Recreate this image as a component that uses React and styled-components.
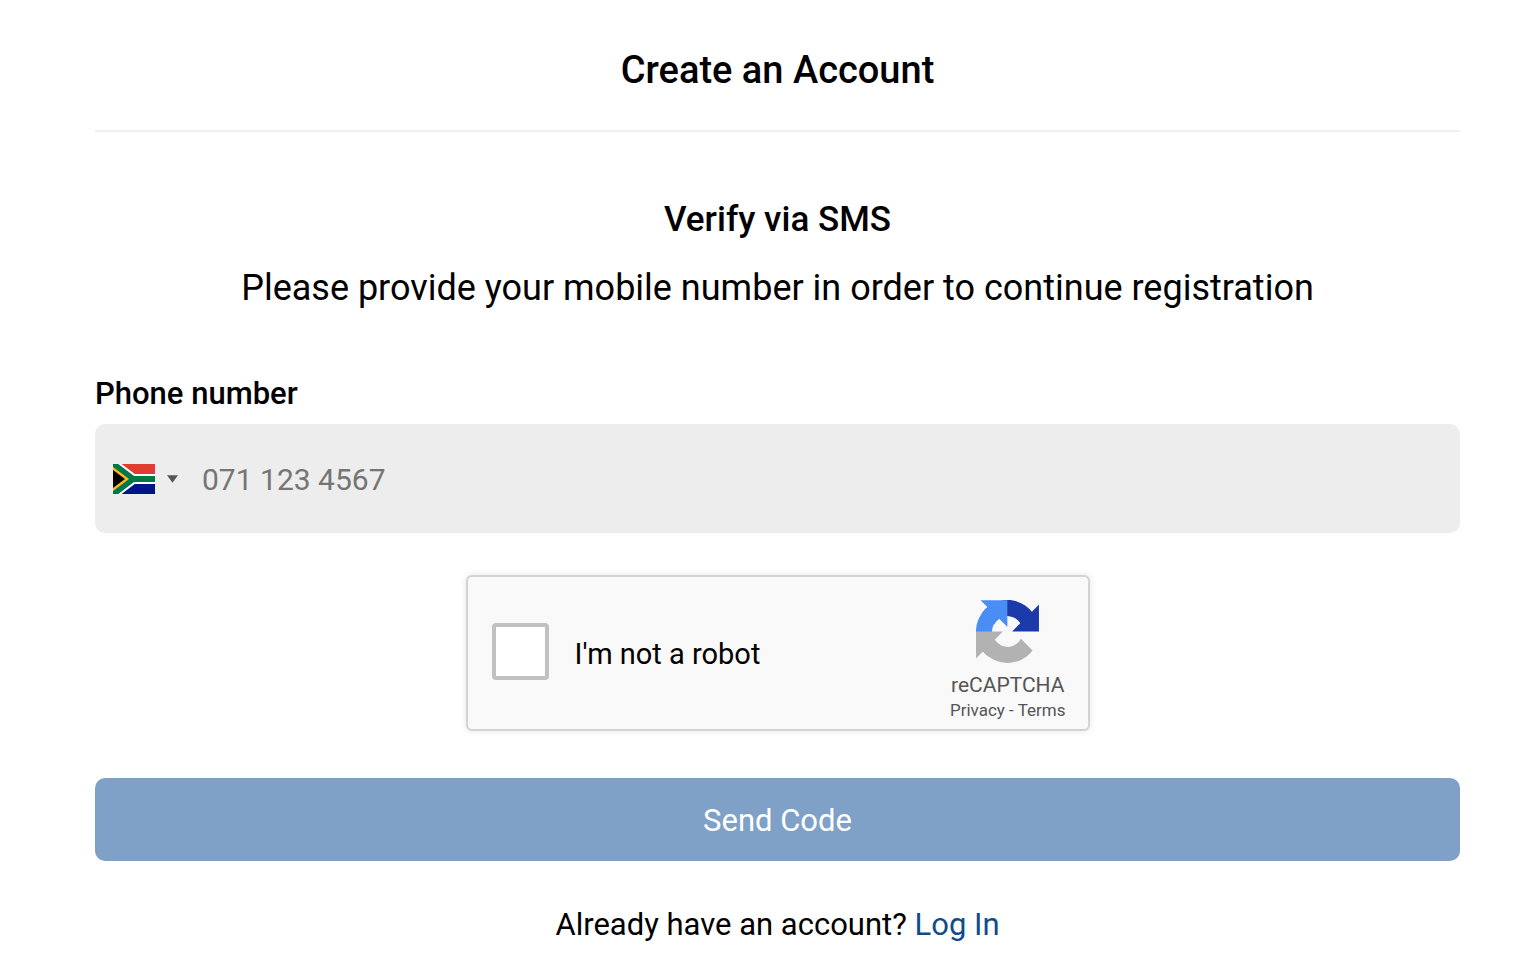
import { useState } from "react";
import styled, { createGlobalStyle } from "styled-components";

const GlobalStyle = createGlobalStyle`
  * {
    box-sizing: border-box;
  }
  body {
    margin: 0;
    background-color: #fff;
    color: #000;
    font-family: Roboto, "Liberation Sans", sans-serif;
  }
`;

const Page = styled.main`
  padding: 45px 76px 8px 95px;
`;
const Title = styled.h1`
  margin: 0;
  padding-bottom: 35px;
  border-bottom: 2px solid #f0f0f0;
  font-size: 38px;
  line-height: 50px;
  font-weight: 500;
  text-align: center;
`;
const Form = styled.form`
  display: flex;
  flex-direction: column;
`;
const Subtitle = styled.h2`
  margin: 64px 0 0;
  font-size: 35px;
  line-height: 48px;
  font-weight: 500;
  text-align: center;
`;
const Intro = styled.p`
  margin: 20px 0 0;
  font-size: 36px;
  line-height: 48px;
  text-align: center;
`;
const FieldLabel = styled.label`
  margin-top: 60px;
  font-size: 31px;
  line-height: 44px;
  font-weight: 500;
`;
const PhoneField = styled.div`
  display: flex;
  align-items: stretch;
  height: 109px;
  margin-top: 8px;
  border-radius: 10px;
  background-color: #ededed;
`;
const CountryButton = styled.button`
  display: flex;
  align-items: center;
  gap: 12px;
  padding: 0 16px 0 18px;
  border: none;
  background: none;
  cursor: pointer;
`;
const PhoneInput = styled.input`
  flex: 1;
  min-width: 0;
  padding: 2px 8px 0;
  border: none;
  outline: none;
  background: none;
  color: #000;
  font-family: inherit;
  font-size: 30px;
  &::placeholder {
    color: #757575;
    opacity: 1;
  }
`;
const Captcha = styled.div`
  display: flex;
  align-items: center;
  justify-content: space-between;
  align-self: center;
  width: 100%;
  max-width: 624px;
  height: 156px;
  margin-top: 42px;
  padding: 0 22px 0 24px;
  border: 2px solid #d3d3d3;
  border-radius: 6px;
  background-color: #f9f9f9;
  box-shadow: 0 0 6px 1px rgba(0, 0, 0, 0.08);
`;
const RobotCheck = styled.div`
  display: flex;
  align-items: center;
  gap: 26px;
  padding-bottom: 4px;
  label {
    padding-top: 5px;
    font-size: 29px;
    line-height: 36px;
  }
`;
const Checkbox = styled.input`
  appearance: none;
  width: 57px;
  height: 57px;
  margin: 0;
  border: 4px solid #c1c1c1;
  border-radius: 4px;
  background-color: #fff;
  cursor: pointer;
  &:checked {
    background-color: #4285f4;
  }
`;
const CaptchaBrand = styled.div`
  display: flex;
  flex-direction: column;
  align-items: center;
  padding-top: 16px;
  color: #555;
`;
const BrandName = styled.span`
  margin-top: 9px;
  font-size: 21px;
  line-height: 26px;
`;
const BrandLinks = styled.span`
  font-size: 17px;
  line-height: 24px;
  a {
    color: inherit;
    text-decoration: none;
  }
`;
const SubmitButton = styled.button`
  width: 100%;
  height: 83px;
  margin-top: 47px;
  padding: 2px 0 0;
  border: none;
  border-radius: 10px;
  background-color: #80a1c7;
  color: #fff;
  font-family: inherit;
  font-size: 31px;
  cursor: pointer;
`;
const LoginText = styled.p`
  margin: 42px 0 0;
  font-size: 31px;
  line-height: 44px;
  text-align: center;
  a {
    color: #0f4c8a;
    text-decoration: none;
  }
`;

const FlagZA = () => (
  <svg width="42" height="30" viewBox="0 0 42 30" aria-hidden="true">
    <path fill="#e03c31" d="M0 0h42v15H0z" />
    <path fill="#001489" d="M0 15h42v15H0z" />
    <path fill="none" stroke="#fff" strokeWidth="10" d="M-1-1 20 15-1 31M20 15h22" />
    <path fill="none" stroke="#007749" strokeWidth="6" d="M-1-1 20 15-1 31M20 15h22" />
    <path fill="#ffb81c" d="M0 3v24l16-12z" />
    <path fill="#000" d="M0 6v18l12-9z" />
  </svg>
);

const Caret = () => (
  <svg width="11" height="8" viewBox="0 0 12 8" aria-hidden="true">
    <path fill="#555" d="M0 0h12L6 8z" />
  </svg>
);

const CaptchaLogo = () => (
  <svg width="63" height="63" viewBox="0 0 64 64" aria-hidden="true">
    <path
      fill="#1c3aa9"
      d="M64 31.955l-.033-1.37V4.687l-7.16 7.16C50.948 4.674 42.033.093 32.05.093c-10.4 0-19.622 4.96-25.458 12.64l11.736 11.86a15.55 15.55 0 0 1 4.754-5.334c2.05-1.6 4.952-2.906 8.968-2.906.485 0 .86.057 1.135.163 4.976.393 9.288 3.14 11.828 7.124l-8.307 8.307L64 31.953"
    />
    <path
      fill="#4a8df5"
      d="M31.862.094l-1.37.033H4.594l7.16 7.16C4.58 13.147 0 22.06 0 32.046c0 10.4 4.96 19.622 12.64 25.458L24.5 45.768a15.55 15.55 0 0 1-5.334-4.754c-1.6-2.05-2.906-4.952-2.906-8.968 0-.485.057-.86.163-1.135.393-4.976 3.14-9.288 7.124-11.828l8.307 8.307L31.86.095"
    />
    <path
      fill="#b2b2b2"
      d="M.001 32.045l.033 1.37v25.898l7.16-7.16c5.86 7.173 14.774 11.754 24.76 11.754 10.4 0 19.622-4.96 25.458-12.64l-11.736-11.86a15.55 15.55 0 0 1-4.754 5.334c-2.05 1.6-4.952 2.906-8.968 2.906-.485 0-.86-.057-1.135-.163-4.976-.393-9.288-3.14-11.828-7.124l8.307-8.307c-10.522.04-22.4.066-27.295-.005"
    />
  </svg>
);

export default function App() {
  const [phone, setPhone] = useState("");
  const [checked, setChecked] = useState(false);

  return (
    <>
      <GlobalStyle />
      <Page>
        <Title>Create an Account</Title>
        <Form onSubmit={(ev) => ev.preventDefault()}>
          <Subtitle>Verify via SMS</Subtitle>
          <Intro>
            Please provide your mobile number in order to continue registration
          </Intro>
          <FieldLabel htmlFor="phone">Phone number</FieldLabel>
          <PhoneField>
            <CountryButton type="button" aria-label="South Africa">
              <FlagZA />
              <Caret />
            </CountryButton>
            <PhoneInput
              id="phone"
              type="tel"
              placeholder="071 123 4567"
              value={phone}
              onChange={(ev) => setPhone(ev.target.value)}
            />
          </PhoneField>
          <Captcha>
            <RobotCheck>
              <Checkbox
                id="robot"
                type="checkbox"
                checked={checked}
                onChange={(ev) => setChecked(ev.target.checked)}
              />
              <label htmlFor="robot">I'm not a robot</label>
            </RobotCheck>
            <CaptchaBrand>
              <CaptchaLogo />
              <BrandName>reCAPTCHA</BrandName>
              <BrandLinks>
                <a href="#privacy">Privacy</a> - <a href="#terms">Terms</a>
              </BrandLinks>
            </CaptchaBrand>
          </Captcha>
          <SubmitButton type="submit">Send Code</SubmitButton>
        </Form>
        <LoginText>
          Already have an account? <a href="#login">Log In</a>
        </LoginText>
      </Page>
    </>
  );
}
